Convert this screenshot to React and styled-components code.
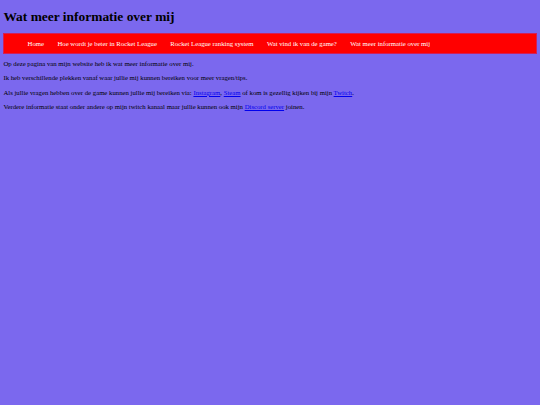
import styled, { createGlobalStyle } from "styled-components";

const GlobalStyle = createGlobalStyle`
  body {
    margin: 3.4px;
    background: #7b68ee;
    font-family: "Liberation Serif", "Times New Roman", serif;
    font-size: 6.74px;
    color: #000;
  }
`;

const Title = styled.h1`
  font-size: 13.45px;
  font-weight: bold;
  line-height: 15px;
  margin: 6px 0 8.5px;
`;

const Nav = styled.nav`
  background: #ff0000;
  border: 0.5px solid #d0205a;
`;

const NavList = styled.ul`
  list-style: none;
  margin: 6px 0;
  padding: 0 0 0 16.5px;
  display: flex;
  line-height: 7.6px;
`;

const NavItem = styled.li`
  padding: 0 6.7px;
`;

const NavLink = styled.a`
  color: #fff;
  text-decoration: none;
`;

const Content = styled.main`
  display: flex;
  flex-direction: column;
  gap: 6.9px;
  padding-top: 5.5px;
`;

const Text = styled.p`
  margin: 0;
  line-height: 7.6px;
`;

const Link = styled.a`
  color: #0000ee;
  text-decoration: underline;
`;

const menu = [
  "Home",
  "Hoe wordt je beter in Rocket League",
  "Rocket League ranking system",
  "Wat vind ik van de game?",
  "Wat meer informatie over mij",
];

const App = () => {
  return (
    <>
      <GlobalStyle />
      <Title>Wat meer informatie over mij</Title>
      <Nav>
        <NavList>
          {menu.map((item) => (
            <NavItem key={item}>
              <NavLink href="#">{item}</NavLink>
            </NavItem>
          ))}
        </NavList>
      </Nav>
      <Content>
        <Text>Op deze pagina van mijn website heb ik wat meer informatie over mij.</Text>
        <Text>Ik heb verschillende plekken vanaf waar jullie mij kunnen bereiken voor meer vragen/tips.</Text>
        <Text>
          Als jullie vragen hebben over de game kunnen jullie mij bereiken via:{" "}
          <Link href="#">Instagram</Link>, <Link href="#">Steam</Link> of kom is gezellig kijken bij mijn{" "}
          <Link href="#">Twitch</Link>.
        </Text>
        <Text>
          Verdere informatie staat onder andere op mijn twitch kanaal maar jullie kunnen ook mijn{" "}
          <Link href="#">Discord server</Link> joinen.
        </Text>
      </Content>
    </>
  );
};

export default App;
